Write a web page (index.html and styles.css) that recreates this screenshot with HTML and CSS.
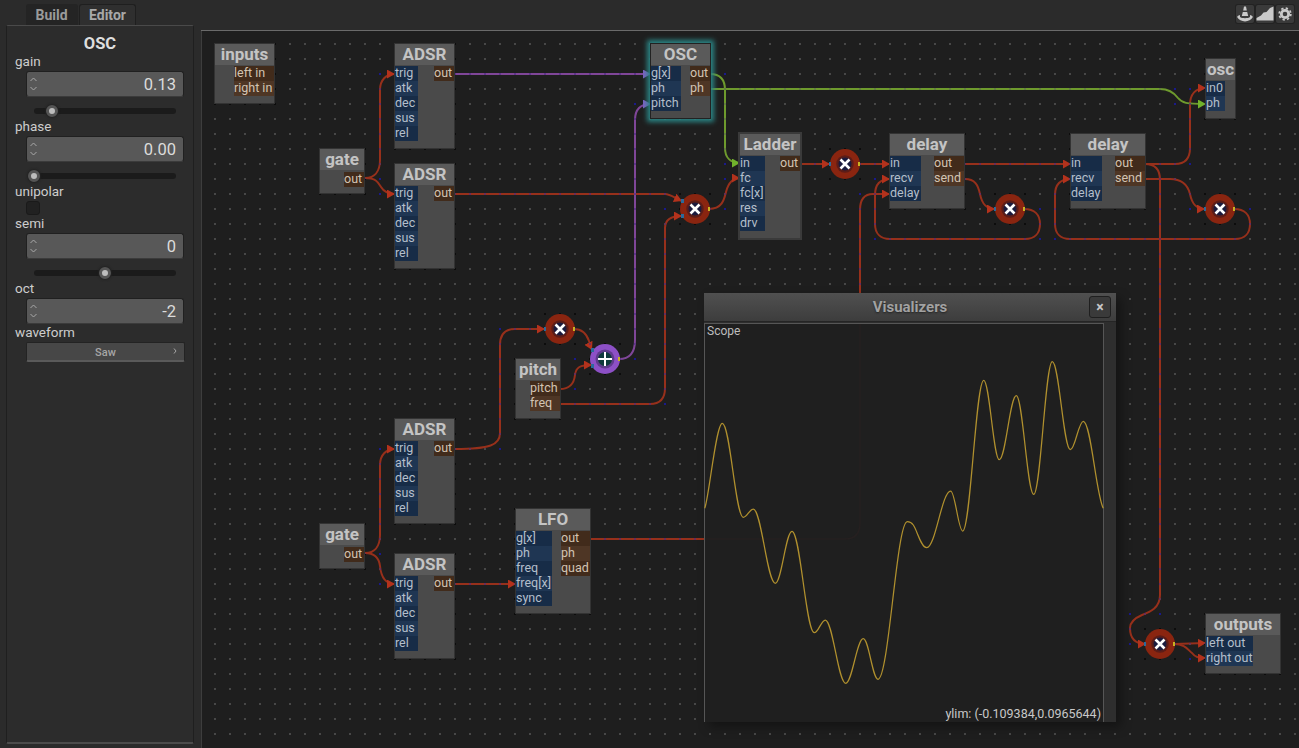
FILE: index.html
```html
<!DOCTYPE html>
<html lang="en">
<head>
    <meta charset="UTF-8">
    <title>Patch Editor</title>
    <link rel="stylesheet" href="styles.css">
</head>
<body>
    <div class="left-col">
        <div class="tabs">
            <div class="tab">Build</div>
            <div class="tab active">Editor</div>
        </div>
        <aside class="panel">
            <div class="panel-title">OSC</div>

            <div class="label">gain</div>
            <div class="spin">
                <svg class="spin-arrows" viewBox="0 0 7 14"><path d="M0.5 4 L3.5 1 L6.5 4 M0.5 10 L3.5 13 L6.5 10"/></svg>
                <span>0.13</span>
            </div>
            <div class="slider"><div class="track"></div><div class="handle handle-gain"></div></div>

            <div class="label">phase</div>
            <div class="spin">
                <svg class="spin-arrows" viewBox="0 0 7 14"><path d="M0.5 4 L3.5 1 L6.5 4 M0.5 10 L3.5 13 L6.5 10"/></svg>
                <span>0.00</span>
            </div>
            <div class="slider"><div class="track"></div><div class="handle handle-phase"></div></div>

            <div class="label">unipolar</div>
            <div class="checkbox"></div>

            <div class="label">semi</div>
            <div class="spin">
                <svg class="spin-arrows" viewBox="0 0 7 14"><path d="M0.5 4 L3.5 1 L6.5 4 M0.5 10 L3.5 13 L6.5 10"/></svg>
                <span>0</span>
            </div>
            <div class="slider"><div class="track"></div><div class="handle handle-semi"></div></div>

            <div class="label">oct</div>
            <div class="spin">
                <svg class="spin-arrows" viewBox="0 0 7 14"><path d="M0.5 4 L3.5 1 L6.5 4 M0.5 10 L3.5 13 L6.5 10"/></svg>
                <span>-2</span>
            </div>

            <div class="label label-waveform">waveform</div>
            <div class="combo">Saw<svg class="combo-arrow" viewBox="0 0 4 6"><path d="M1 0.5 L3 3 L1 5.5"/></svg></div>
        </aside>
    </div>

    <div class="right-col">
        <div class="toolbar">
            <button class="tool">
                <svg viewBox="0 0 18 18"><path d="M8 1.5 H10 L10.8 5.5 H7.2 Z M6.8 7 H11.2 L12.2 11 H5.8 Z"/><path d="M4 10 C2 10.6 0.8 11.4 1.4 12.6 C2.6 14.9 5.8 16.4 9 16.4 C12.2 16.4 15.4 14.9 16.6 12.6 C17.2 11.4 16 10.6 14 10 L14 12 C12.5 13.6 5.5 13.6 4 12 Z"/></svg>
            </button>
            <button class="tool">
                <svg viewBox="0 0 18 18"><path d="M0.5 15.5 V13 L5 10.5 L7.5 7.5 L10.5 7 L14 3 L17.5 1.5 V15.5 Z"/></svg>
            </button>
            <button class="tool">
                <svg viewBox="0 0 18 18"><circle class="gear-teeth" cx="9" cy="9" r="5.8"/><circle class="gear-ring" cx="9" cy="9" r="3.7"/></svg>
            </button>
        </div>

        <main class="canvas">
            <svg class="wires" viewBox="201 30 1098 718">
                <defs>
                    <pattern id="grid" x="214" y="43" width="15" height="15" patternUnits="userSpaceOnUse">
                        <rect width="2" height="2" fill="#474747"/>
                    </pattern>
                    <pattern id="grid-dark" x="214" y="43" width="15" height="15" patternUnits="userSpaceOnUse">
                        <rect width="2" height="2" fill="#0c0c0c"/>
                    </pattern>
                    <pattern id="wire-dots" x="214" y="43" width="15" height="15" patternUnits="userSpaceOnUse">
                        <rect width="2" height="2" fill="#4c2a86"/>
                    </pattern>
                    <marker id="arrow-red" markerUnits="userSpaceOnUse" markerWidth="8" markerHeight="9" viewBox="0 0 8 9" refX="8" refY="4.5" orient="auto">
                        <path d="M0 0 L8 4.5 L0 9 Z" fill="#b3321c"/>
                    </marker>
                    <marker id="arrow-purple" markerUnits="userSpaceOnUse" markerWidth="8" markerHeight="9" viewBox="0 0 8 9" refX="8" refY="4.5" orient="auto">
                        <path d="M0 0 L8 4.5 L0 9 Z" fill="#7d62c4"/>
                    </marker>
                    <marker id="arrow-green" markerUnits="userSpaceOnUse" markerWidth="8" markerHeight="9" viewBox="0 0 8 9" refX="8" refY="4.5" orient="auto">
                        <path d="M0 0 L8 4.5 L0 9 Z" fill="#71b32c"/>
                    </marker>

                    <g id="red-wires">
                        <path d="M365 178 C374 178 380 172 380 160 L380 90 C380 80 386 74 395 74"/>
                        <path d="M365 178 C376 178 378 182 381 187 C384 192 388 194 395 194"/>
                        <path d="M455 194 L665 194 C670 194 675 198 682 201"/>
                        <path d="M560 404 L650 404 C660 404 665 398 665 388 L665 228 C665 220 670 216 682 216"/>
                        <path d="M709 209 C722 209 724 200 726 192 C728 184 732 178 740 178"/>
                        <path d="M800 164 L830 164"/>
                        <path d="M859 164 L890 164"/>
                        <path d="M965 164 L1071 164"/>
                        <path d="M965 179 C975 179 978 185 980 194 C982 204 986 209 995 209"/>
                        <path d="M1145 179 L1170 179 C1182 179 1188 186 1190 194 C1192 204 1196 209 1205 209"/>
                        <path d="M1024 209 C1035 209 1040 215 1040 224 C1040 233 1035 239 1025 239 L890 239 C880 239 875 233 875 224 L875 195 C875 185 880 179 890 179"/>
                        <path d="M1234 209 C1245 209 1250 215 1250 224 C1250 233 1245 239 1235 239 L1070 239 C1060 239 1055 233 1055 224 L1055 195 C1055 185 1060 179 1071 179"/>
                        <path d="M1145 164 L1175 164 C1185 164 1190 158 1190 148 L1190 105 C1190 95 1195 88 1206 88"/>
                        <path d="M1145 164 C1155 164 1160 170 1160 180 L1160 595 C1160 608 1150 612 1142 615 C1135 618 1130 622 1130 628 C1130 638 1135 644 1146 644"/>
                        <path d="M590 539 L845 539 C855 539 860 533 860 523 L860 210 C860 199 864 194 873 194 L890 194"/>
                        <path d="M455 449 C490 449 500 445 500 433 L500 345 C500 335 505 329 515 329 L545 329"/>
                        <path d="M574 329 C583 329 587 335 589 341 C590 345 591 348 592 350"/>
                        <path d="M560 389 C570 389 574 384 575 375 C576 367 580 365 592 365"/>
                        <path d="M365 553 C374 553 380 547 380 535 L380 465 C380 455 386 449 395 449"/>
                        <path d="M365 553 C375 553 379 558 380 566 C381 577 386 584 395 584"/>
                        <path d="M455 584 L516 584"/>
                        <path d="M1174 644 L1206 643"/>
                        <path d="M1174 644 C1185 644 1188 650 1192 653 C1195 657 1198 658 1206 658"/>
                    </g>
                    <g id="purple-wires">
                        <path d="M455 74 L651 74"/>
                        <path d="M619 359 C629 359 635 353 635 340 L635 120 C635 110 640 104 651 104"/>
                    </g>
                    <g id="green-wires">
                        <path d="M710 74 C720 74 725 80 725 90 L725 148 C725 157 730 163 740 163"/>
                        <path d="M710 89 L1160 89 C1170 89 1175 94 1178 98 C1182 103 1186 104 1206 104"/>
                    </g>

                    <g id="mult-body">
                        <circle r="15" fill="#8a2510"/>
                        <circle r="8.7" fill="#5c1d18"/>
                        <circle r="6.5" fill="#1b1b3e"/>
                        <path d="M-4.5 -4.5 L4.5 4.5 M-4.5 4.5 L4.5 -4.5" stroke="#fff" stroke-width="2.6"/>
                    </g>
                </defs>

                <rect x="201" y="30" width="1098" height="718" fill="url(#grid)"/>

                <!-- grid points under a node's frame show up darker -->
                <path fill="url(#grid-dark)" d="M213 42h63v63h-63z M393 42h63v108h-63z M393 162h63v108h-63z M393 417h63v108h-63z M393 552h63v108h-63z M318 148h48v47h-48z M318 523h48v47h-48z M738 132h64v110h-64z M888 132h78v78h-78z M1069 132h78v78h-78z M1204 57h33v63h-33z M514 357h48v63h-48z M514 507h78v108h-78z M1204 612h78v63h-78z M828 147h34v34h-34z M678 192h34v34h-34z M993 192h34v34h-34z M1203 192h34v34h-34z M543 312h34v34h-34z M1143 627h34v34h-34z M588 342h34v34h-34z"/>

                <g class="wire" stroke="#97301b" marker-end="url(#arrow-red)"><use href="#red-wires"/></g>
                <g class="wire" stroke="#7f4698" marker-end="url(#arrow-purple)"><use href="#purple-wires"/></g>
                <g class="wire" stroke="#6e9a2d" marker-end="url(#arrow-green)"><use href="#green-wires"/></g>
                <g class="wire wire-dots" stroke="url(#wire-dots)">
                    <use href="#red-wires"/>
                    <use href="#purple-wires"/>
                </g>
                <g class="wire wire-dots-faint" stroke="url(#wire-dots)"><use href="#green-wires"/></g>

                <!-- blue grid points next to the wires -->
                <path class="blue-dots" d="M380 74h.01M380 179h.01M380 194h.01M725 74h.01M635 104h.01M725 164h.01M725 179h.01M665 209h.01M725 209h.01M875 179h.01M860 194h.01M875 239h.01M1175 89h.01M1190 89h.01M1175 104h.01M1190 164h.01M1190 209h.01M1040 209h.01M1055 239h.01M1040 239h.01M1250 209h.01M500 329h.01M575 359h.01M635 359h.01M575 389h.01M665 404h.01M1130 614h.01M1160 614h.01M1130 644h.01M1190 659h.01M380 449h.01M500 449h.01M380 554h.01M380 584h.01"/>

                <!-- multiply and add nodes -->
                <g transform="translate(845 164)">
                    <use href="#mult-body"/>
                    <rect class="pin-in" x="-16" y="-2" width="2" height="4"/>
                    <rect class="pin-out" x="13" y="-2" width="2" height="4"/>
                </g>
                <g transform="translate(695 209)">
                    <use href="#mult-body"/>
                    <rect class="pin-in" x="-14" y="-10" width="3" height="4"/>
                    <rect class="pin-in" x="-14" y="5" width="3" height="4"/>
                    <rect class="pin-out" x="13" y="-2" width="2" height="4"/>
                </g>
                <g transform="translate(1010 209)">
                    <use href="#mult-body"/>
                    <rect class="pin-in" x="-16" y="-2" width="2" height="4"/>
                    <rect class="pin-out" x="13" y="-2" width="2" height="4"/>
                </g>
                <g transform="translate(1220 209)">
                    <use href="#mult-body"/>
                    <rect class="pin-in" x="-16" y="-2" width="2" height="4"/>
                    <rect class="pin-out" x="13" y="-2" width="2" height="4"/>
                </g>
                <g transform="translate(560 329)">
                    <use href="#mult-body"/>
                    <rect class="pin-in" x="-16" y="-2" width="2" height="4"/>
                    <rect class="pin-out" x="13" y="-2" width="2" height="4"/>
                </g>
                <g transform="translate(1160 644)">
                    <use href="#mult-body"/>
                    <rect class="pin-in" x="-16" y="-2" width="2" height="4"/>
                    <rect class="pin-out" x="13" y="-2" width="2" height="4"/>
                </g>
                <g transform="translate(605 359)">
                    <circle r="15" fill="#8d50c6"/>
                    <circle r="9.5" fill="#5f3b8c"/>
                    <circle r="7" fill="#0f3b3c"/>
                    <path d="M-7 0 H7 M0 -7 V7" stroke="#fff" stroke-width="2"/>
                    <rect class="pin-in" x="-14" y="-11" width="3" height="4"/>
                    <rect class="pin-in" x="-14" y="5" width="3" height="4"/>
                    <rect class="pin-out" x="13" y="-2" width="2" height="4"/>
                </g>
            </svg>

            <div class="node n-inputs">
                <div class="title">inputs</div>
                <div class="ports">
                    <div class="col out w40"><div>left in</div><div>right in</div></div>
                </div>
            </div>

            <div class="node n-adsr1">
                <div class="title">ADSR</div>
                <div class="ports">
                    <div class="col in w23"><div>trig</div><div>atk</div><div>dec</div><div>sus</div><div>rel</div></div>
                    <div class="col out w20"><div>out</div></div>
                </div>
            </div>

            <div class="node n-adsr2">
                <div class="title">ADSR</div>
                <div class="ports">
                    <div class="col in w23"><div>trig</div><div>atk</div><div>dec</div><div>sus</div><div>rel</div></div>
                    <div class="col out w20"><div>out</div></div>
                </div>
            </div>

            <div class="node n-adsr3">
                <div class="title">ADSR</div>
                <div class="ports">
                    <div class="col in w23"><div>trig</div><div>atk</div><div>dec</div><div>sus</div><div>rel</div></div>
                    <div class="col out w20"><div>out</div></div>
                </div>
            </div>

            <div class="node n-adsr4">
                <div class="title">ADSR</div>
                <div class="ports">
                    <div class="col in w23"><div>trig</div><div>atk</div><div>dec</div><div>sus</div><div>rel</div></div>
                    <div class="col out w20"><div>out</div></div>
                </div>
            </div>

            <div class="node n-gate n-gate1">
                <div class="title">gate</div>
                <div class="ports"><div class="col out w20"><div>out</div></div></div>
            </div>

            <div class="node n-gate n-gate2">
                <div class="title">gate</div>
                <div class="ports"><div class="col out w20"><div>out</div></div></div>
            </div>

            <div class="node n-osc">
                <div class="title">OSC</div>
                <div class="ports">
                    <div class="col in w30"><div>g[x]</div><div>ph</div><div>pitch</div></div>
                    <div class="col out w20"><div>out</div><div>ph</div></div>
                </div>
            </div>

            <div class="node n-ladder">
                <div class="title">Ladder</div>
                <div class="ports">
                    <div class="col in w25"><div>in</div><div>fc</div><div>fc[x]</div><div>res</div><div>drv</div></div>
                    <div class="col out w20"><div>out</div></div>
                </div>
            </div>

            <div class="node n-delay1">
                <div class="title">delay</div>
                <div class="ports">
                    <div class="col in w31"><div>in</div><div>recv</div><div>delay</div></div>
                    <div class="col out w30"><div>out</div><div>send</div></div>
                </div>
            </div>

            <div class="node n-delay2">
                <div class="title">delay</div>
                <div class="ports">
                    <div class="col in w31"><div>in</div><div>recv</div><div>delay</div></div>
                    <div class="col out w30"><div>out</div><div>send</div></div>
                </div>
            </div>

            <div class="node n-oscout">
                <div class="title">osc</div>
                <div class="ports">
                    <div class="col in w19"><div>in0</div><div>ph</div></div>
                </div>
            </div>

            <div class="node n-pitch">
                <div class="title">pitch</div>
                <div class="ports">
                    <div class="col out w30"><div>pitch</div><div>freq</div></div>
                </div>
            </div>

            <div class="node n-lfo">
                <div class="title">LFO</div>
                <div class="ports">
                    <div class="col in w36"><div>g[x]</div><div>ph</div><div>freq</div><div>freq[x]</div><div>sync</div></div>
                    <div class="col out w29"><div>out</div><div>ph</div><div>quad</div></div>
                </div>
            </div>

            <div class="node n-outputs">
                <div class="title">outputs</div>
                <div class="ports">
                    <div class="col in w47"><div>left out</div><div>right out</div></div>
                </div>
            </div>

            <section class="window">
                <header class="window-bar">
                    <span>Visualizers</span>
                    <button class="close">&times;</button>
                </header>
                <div class="window-body">
                    <div class="scope">
                        <svg class="plot" viewBox="705 324 398 398">
                            <path class="ghost" d="M705 539 L845 539 C855 539 860 533 860 523 L860 324"/>
                            <path class="trace" d="M704.7 508.3 C709 498 716 423.3 722.3 423.3 C730.1 423.3 735.5 517.3 743.3 517.3 C747 517.3 749.6 509 753.3 509 C761.4 509 767.2 583.3 775.3 583.3 C781.5 583.3 785.8 531.3 792 531.3 C800.3 531.3 806 632.7 814.3 632.7 C818.4 632.7 821.2 620 825.3 620 C832.8 620 838.2 683.3 845.7 683.3 C852.2 683.3 856.8 638.7 863.3 638.7 C868.7 638.7 872.6 679.3 878 679.3 C888.8 679.3 896.5 521.7 907.3 521.7 C909.5 521.7 911.5 522.5 913.3 525 C917 530 921 547.7 926.7 547.7 C935.6 547.7 941.8 491 950.7 491 C955.1 491 958.3 531 962.7 531 C970.5 531 975.9 380.3 983.7 380.3 C989.5 380.3 993.5 459.7 999.3 459.7 C1005.6 459.7 1010 395.7 1016.3 395.7 C1022.7 395.7 1027.3 494.3 1033.7 494.3 C1040.6 494.3 1045.4 361.7 1052.3 361.7 C1059 361.7 1063.6 449.7 1070.3 449.7 C1075.1 449.7 1078.5 421.3 1083.3 421.3 C1091 421.3 1096 495 1103.3 508.3"/>
                        </svg>
                        <div class="scope-title">Scope</div>
                        <div class="scope-range">ylim: (-0.109384,0.0965644)</div>
                    </div>
                    <div class="window-strip"></div>
                </div>
            </section>
        </main>
    </div>
</body>
</html>
```

FILE: styles.css
```css
* {
    box-sizing: border-box;
}

html, body {
    margin: 0;
    height: 100%;
    overflow: hidden;
}

body {
    display: grid;
    grid-template-columns: 201px 1fr;
    background: #2b2b2b;
    font-family: Roboto, "Liberation Sans", sans-serif;
    color: #cfcfcf;
}

/* left side */
.left-col {
    display: flex;
    flex-direction: column;
    padding: 4px 7px 4px 6px;
}

.tabs {
    display: flex;
    height: 21px;
    padding-left: 20px;
    gap: 1px;
}

.tab {
    width: 52px;
    height: 21px;
    padding: 3px 1px 0 0;
    text-align: center;
    font-size: 14px;
    font-weight: 700;
    color: #9a9a9a;
    background: #242424;
    border-radius: 3px 3px 0 0;
}

.tab.active {
    width: 57px;
    color: #a8a8a8;
    background: #2f2f2f;
    border: 1px solid #1f1f1f;
    border-bottom: 0;
    padding: 2px 0 0;
}

.panel {
    flex: 1;
    padding: 7px 8px 0;
    background: #2c2c2c;
    border: 1px solid #1f1f1f;
    border-top-color: #4a4a4a;
    border-bottom: 2px solid #4c4c4c;
    border-radius: 2px;
}

.panel-title {
    height: 20px;
    margin-bottom: 1px;
    text-align: center;
    font-size: 16.5px;
    line-height: 22px;
    font-weight: 700;
    color: #dedede;
}

.label {
    height: 15px;
    font-size: 13.5px;
    line-height: 15px;
    color: #cdcdcd;
}

.label-waveform {
    margin-top: 1px;
}

.spin {
    position: relative;
    display: flex;
    justify-content: flex-end;
    align-items: center;
    width: 158px;
    height: 26px;
    margin: 2px 0 0 11px;
    padding-right: 7px;
    background: #585858;
    border: 1px solid #202020;
    border-bottom-color: #3b3b3b;
    border-radius: 3px;
    font-size: 16.5px;
    color: #dcdcdc;
}

.spin-arrows {
    position: absolute;
    left: 3px;
    top: 5px;
    width: 7px;
    height: 14px;
    fill: none;
    stroke: #a8a8a8;
    stroke-width: 1;
}

.slider {
    position: relative;
    height: 22px;
}

.track {
    position: absolute;
    left: 19px;
    top: 11px;
    width: 142px;
    height: 6px;
    background: #1b1b1b;
    border-radius: 3px;
}

.handle {
    position: absolute;
    top: 8px;
    width: 12px;
    height: 12px;
    background: #bdbdbd;
    border: 3px solid #555;
    border-radius: 50%;
    box-shadow: 0 0 2px 1px #222;
}

.handle-gain { left: 31px; }
.handle-phase { left: 13px; }
.handle-semi { left: 84px; }

.checkbox {
    width: 14px;
    height: 14px;
    margin: 2px 0 1px 11px;
    background: #212121;
    border: 1px solid #1a1a1a;
    border-radius: 3px;
}

.combo {
    position: relative;
    width: 159px;
    height: 20px;
    margin: 2px 0 0 11px;
    text-align: center;
    font-size: 11px;
    line-height: 20px;
    font-weight: 500;
    color: #a6a6a6;
    background: #474747;
    border: 1px solid #232323;
    border-bottom: 2px solid #5a5a5a;
    border-radius: 2px;
}

.combo-arrow {
    position: absolute;
    right: 7px;
    top: 5px;
    width: 4px;
    height: 6px;
    fill: none;
    stroke: #a6a6a6;
}

/* right side */
.right-col {
    display: flex;
    flex-direction: column;
    min-width: 0;
}

.toolbar {
    display: flex;
    justify-content: flex-end;
    gap: 2px;
    height: 30px;
    padding: 5px 5px 0 0;
}

.tool {
    width: 18px;
    height: 18px;
    padding: 0;
    background: #3a3a3a;
    border: 0;
    border-radius: 2px;
    box-shadow: 0 0 0 1px #222;
}

.tool svg {
    display: block;
    width: 18px;
    height: 18px;
    fill: #c9c9c9;
}

.gear-teeth {
    fill: none;
    stroke: #c9c9c9;
    stroke-width: 1.8;
    stroke-dasharray: 2.28 2.28;
}

.gear-ring {
    fill: none;
    stroke: #c9c9c9;
    stroke-width: 2.8;
}

.canvas {
    position: relative;
    flex: 1;
    background: #1e1e1e;
    box-shadow: inset 0 1px 0 #6a6a6a, inset 1px 0 0 #3d3d3d;
    overflow: hidden;
}

.wires {
    position: absolute;
    left: 0;
    top: 0;
    width: 1098px;
    height: 718px;
}

.wire {
    fill: none;
    stroke-width: 2;
}

.wire-dots { opacity: 0.6; }
.wire-dots-faint { opacity: 0.25; }

.blue-dots {
    stroke: #1a1a8a;
    stroke-width: 2;
    stroke-linecap: square;
}

.pin-in { fill: #2a6b9c; }
.pin-out { fill: #c9b322; }

/* nodes sit on a free canvas, so these are placed by coordinates */
.node {
    position: absolute;
    background: #4a4a4a;
    box-shadow: 0 0 0 1px #333;
}

.title {
    height: 21px;
    margin-bottom: 1px;
    text-align: center;
    font-size: 17px;
    line-height: 21px;
    font-weight: 700;
    color: #c4c4c4;
    background: #5a5a5a;
    white-space: nowrap;
}

.n-gate .title {
    margin-bottom: 2px;
}

.ports {
    display: flex;
    justify-content: space-between;
    font-size: 12.5px;
    line-height: 14px;
}

.col div {
    height: 15px;
    white-space: nowrap;
}

.in { color: #b4bfcb; }
.in div:nth-child(odd) { background: #172c47; }
.in div:nth-child(even) { background: #1f3653; }

.out {
    margin-left: auto;
    color: #d3c4b3;
}
.out div:nth-child(odd) { background: #412b1b; }
.out div:nth-child(even) { background: #4e3625; }

.w19 { width: 19px; }
.w20 { width: 20px; }
.w23 { width: 23px; }
.w25 { width: 25px; }
.w29 { width: 29px; }
.w30 { width: 30px; }
.w31 { width: 31px; }
.w36 { width: 36px; }
.w40 { width: 40px; }
.w47 { width: 47px; }

.n-inputs { left: 14px; top: 14px; width: 59px; height: 59px; }
.n-adsr1 { left: 194px; top: 14px; width: 59px; height: 104px; }
.n-adsr2 { left: 194px; top: 134px; width: 59px; height: 104px; }
.n-adsr3 { left: 194px; top: 389px; width: 59px; height: 104px; }
.n-adsr4 { left: 194px; top: 524px; width: 59px; height: 104px; }
.n-gate { width: 44px; height: 44px; }
.n-gate1 { left: 119px; top: 119px; }
.n-gate2 { left: 119px; top: 494px; }
.n-osc {
    left: 450px;
    top: 14px;
    width: 59px;
    height: 74px;
    box-shadow: 0 0 0 1px #222, 0 0 5px 4px #2a8585;
}
.n-ladder {
    left: 539px;
    top: 104px;
    width: 60px;
    height: 104px;
    box-shadow: 0 0 0 2px #3a3a3a;
}
.n-delay1 { left: 689px; top: 104px; width: 74px; height: 74px; }
.n-delay2 { left: 870px; top: 104px; width: 74px; height: 74px; }
.n-oscout { left: 1005px; top: 29px; width: 29px; height: 59px; }
.n-pitch { left: 315px; top: 329px; width: 44px; height: 59px; }
.n-lfo { left: 315px; top: 479px; width: 74px; height: 104px; }
.n-outputs { left: 1005px; top: 584px; width: 74px; height: 59px; }

/* floating window */
.window {
    position: absolute;
    left: 503px;
    top: 263px;
    width: 412px;
    height: 429px;
    display: flex;
    flex-direction: column;
    background: #2e2e2e;
    box-shadow: 5px 5px 10px rgba(0, 0, 0, 0.35);
}

.window-bar {
    position: relative;
    flex: none;
    height: 29px;
    text-align: center;
    font-size: 15px;
    line-height: 28px;
    font-weight: 700;
    color: #a2a2a2;
    text-shadow: 0 1px 2px #222;
    background: linear-gradient(#505050, #3d3d3d);
    border-bottom: 1px solid #252525;
}

.close {
    position: absolute;
    right: 5px;
    top: 3px;
    width: 22px;
    height: 22px;
    padding: 0;
    font: 700 14px/18px Roboto, sans-serif;
    color: #c8c8c8;
    background: #3a3a3a;
    border: 1px solid #1f1f1f;
    border-radius: 3px;
}

.window-body {
    flex: 1;
    display: flex;
    margin-top: 1px;
    min-height: 0;
}

.scope {
    position: relative;
    flex: 1;
    background: #1f1f1f;
    border: 1px solid #565656;
    border-bottom: 0;
}

.plot {
    position: absolute;
    left: 0;
    top: 0;
    width: 398px;
    height: 398px;
    fill: none;
    overflow: visible;
}

.trace {
    stroke: #b0902e;
    stroke-width: 1.25;
}

.ghost {
    stroke: #262020;
    stroke-width: 1.5;
}

.scope-title {
    position: absolute;
    left: 2px;
    top: 0;
    font-size: 12px;
    line-height: 15px;
    color: #bdbdbd;
}

.scope-range {
    position: absolute;
    right: 2px;
    bottom: 1px;
    font-size: 12.5px;
    line-height: 15px;
    color: #c8c8c8;
}

.window-strip {
    width: 12px;
}
```
